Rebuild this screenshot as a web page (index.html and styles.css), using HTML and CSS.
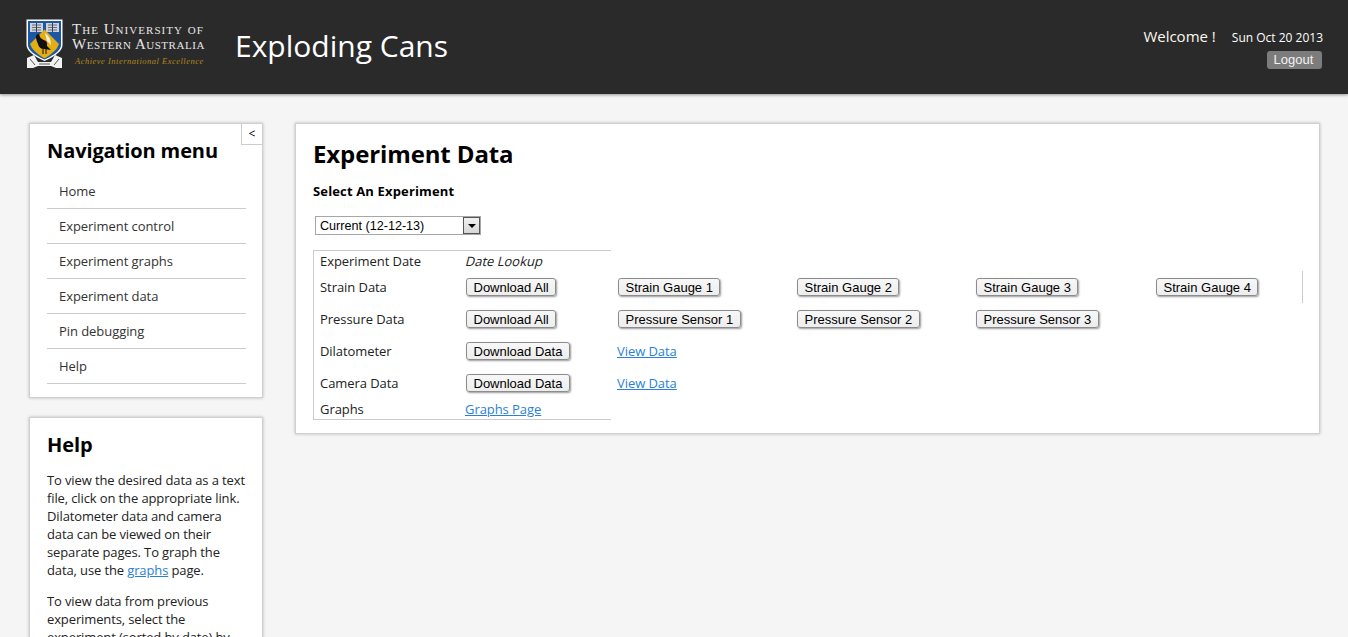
FILE: index.html
```html
<!DOCTYPE html>
<html lang="en">
<head>
<meta charset="utf-8">
<title>Exploding Cans</title>
<link rel="stylesheet" href="styles.css">
</head>
<body>
<div class="page">
  <header class="topbar">
    <div class="logo">
      <svg class="crest" width="37" height="50" viewBox="0 0 37 50">
        <path d="M0.5 0.5H36.500V26Q36.500 34 18.500 42Q0.500 34 0.500 26Z" fill="#fff"/>
        <path d="M2 2H35V26Q35 33 18.500 40.500Q2 33 2 26Z" fill="#1b57a4"/>
        <rect x="4" y="4" width="13" height="9" fill="#cfd3d8"/>
        <rect x="20" y="4" width="13" height="9" fill="#cfd3d8"/>
        <path d="M6 6H15M6 8.500H15M6 11H15M22 6H31M22 8.500H31M22 11H31" stroke="#69707c" stroke-width="1"/>
        <path d="M10.500 4V13M26.500 4V13" stroke="#33405c" stroke-width="1"/>
        <path d="M18.500 10.500L33 25Q31 32 18.500 39.500Q6 32 4 25Z" fill="#e3ad14"/>
        <path d="M13 15Q9.500 15 10 19Q10.500 22 12 25Q13 30 18 30L25 31L21 27Q22 24 20 22Q15 20 14 18Z" fill="#111"/>
        <path d="M19 14Q25 18 25 26L21 22Z" fill="#f1eedf"/>
        <path d="M17 30V35M20 30V35" stroke="#111" stroke-width="1"/>
        <path d="M1 39L8 36L12 43L25 43L29 36L36 39V49H30L25 47H12L7 49H1Z" fill="#f2f2f2"/>
        <path d="M4 40L9 46M33 40L28 46M13 45H24" stroke="#555" stroke-width="1"/>
      </svg>
      <div class="wordmark">
        <div class="wordline lineone">The University of</div>
        <div class="wordline linetwo">Western Australia</div>
        <div class="tagline">Achieve International Excellence</div>
      </div>
    </div>
    <div class="sitename">Exploding Cans</div>
    <div class="userbox">
      <div class="userline"><span class="welcome">Welcome !</span><span class="date">Sun Oct 20 2013</span></div>
      <a class="logout" href="#">Logout</a>
    </div>
  </header>

  <div class="content">
    <aside class="sidebar">
      <section class="card navcard">
        <button class="collapse" type="button">&lt;</button>
        <h2>Navigation menu</h2>
        <ul class="nav">
          <li>Home</li>
          <li>Experiment control</li>
          <li>Experiment graphs</li>
          <li>Experiment data</li>
          <li>Pin debugging</li>
          <li>Help</li>
        </ul>
      </section>
      <section class="card helpcard">
        <h2>Help</h2>
        <p>To view the desired data as a text file, click on the appropriate link. Dilatometer data and camera data can be viewed on their separate pages. To graph the data, use the <a href="#">graphs</a> page.</p>
        <p>To view data from previous experiments, select the experiment (sorted by date) by</p>
      </section>
    </aside>

    <main class="card maincard">
      <h1>Experiment Data</h1>
      <h3>Select An Experiment</h3>
      <div class="selectwrap">
        <select class="picker"><option>Current (12-12-13)</option></select>
        <span class="selectarrow"></span>
      </div>
      <table class="data">
        <colgroup>
          <col class="c1"><col class="c2"><col class="c3"><col class="c3"><col class="c5"><col class="c6">
        </colgroup>
        <tr class="firstrow">
          <td class="lead top">Experiment Date</td>
          <td class="top"><em>Date Lookup</em></td>
          <td colspan="4" class="blank"></td>
        </tr>
        <tr class="btnrow">
          <td class="lead">Strain Data</td>
          <td><button type="button">Download All</button></td>
          <td><button type="button">Strain Gauge 1</button></td>
          <td><button type="button">Strain Gauge 2</button></td>
          <td><button type="button">Strain Gauge 3</button></td>
          <td class="rightedge"><button type="button">Strain Gauge 4</button></td>
        </tr>
        <tr class="btnrow">
          <td class="lead">Pressure Data</td>
          <td><button type="button">Download All</button></td>
          <td><button type="button">Pressure Sensor 1</button></td>
          <td><button type="button">Pressure Sensor 2</button></td>
          <td><button type="button">Pressure Sensor 3</button></td>
          <td></td>
        </tr>
        <tr class="btnrow">
          <td class="lead">Dilatometer</td>
          <td><button type="button">Download Data</button></td>
          <td colspan="4"><a href="#">View Data</a></td>
        </tr>
        <tr class="btnrow">
          <td class="lead">Camera Data</td>
          <td><button type="button">Download Data</button></td>
          <td colspan="4"><a href="#">View Data</a></td>
        </tr>
        <tr class="lastrow">
          <td class="lead bottom">Graphs</td>
          <td class="bottom"><a href="#">Graphs Page</a></td>
          <td colspan="4" class="blank"></td>
        </tr>
      </table>
    </main>
  </div>
</div>
</body>
</html>
```

FILE: styles.css
```css
* { box-sizing: border-box; }
html, body { margin: 0; padding: 0; }
body {
  background: #f5f5f5;
  color: #000;
  font-family: "Open Sans", "Liberation Sans", sans-serif;
  font-size: 13px;
}
.page { height: 637px; overflow: hidden; }
a { color: #2a7fd6; }

.topbar {
  height: 94px;
  background: #2a2a2a;
  box-shadow: 0 1px 3px rgba(0,0,0,.4);
  display: flex;
  align-items: flex-start;
  color: #fff;
  padding: 0 25px 0 26px;
}
.logo { display: flex; margin-top: 19px; width: 179px; flex: none; }
.crest { flex: none; display: block; }
.wordmark { margin-left: 9px; width: 134px; white-space: nowrap; font-family: "Liberation Serif", serif; color: #e6e6e6; }
.wordline {
  font-size: 15px;
  line-height: 15px;
  font-variant: small-caps;
}
.lineone { margin-top: 3px; letter-spacing: 1.04px; }
.linetwo { letter-spacing: .53px; }
.tagline {
  margin: 3px 0 0 3px;
  font-size: 8.500px;
  line-height: 12px;
  font-style: italic;
  letter-spacing: .5px;
  color: #b0891c;
}
.sitename { margin: 25px 0 0 30px; font-size: 30px; line-height: 41px; }
.userbox { margin-left: auto; display: flex; flex-direction: column; align-items: flex-end; }
.userline { margin-top: 25px; display: flex; align-items: baseline; height: 22px; }
.welcome { font-size: 15px; line-height: 22px; color: #fbf8ee; }
.date { margin-left: 16px; font-size: 12px; }
.logout {
  margin-top: 4px;
  margin-right: 1px;
  width: 55px;
  height: 18px;
  padding-right: 2px;
  border-radius: 3px;
  background: #7c7c7c;
  color: #f2f2f2;
  font-family: "Liberation Sans", sans-serif;
  font-size: 13px;
  line-height: 18px;
  text-align: center;
  text-decoration: none;
}

.content { display: flex; align-items: flex-start; padding: 29px 28px 0 29px; gap: 32px; }
.card { background: #fff; border: 1px solid #d0d0d0; box-shadow: 0 0 3px rgba(0,0,0,.25); }
.sidebar { width: 234px; flex: none; display: flex; flex-direction: column; gap: 19px; }

.navcard { position: relative; height: 275px; padding: 0 16px 0 17px; }
.collapse {
  position: absolute;
  top: 0;
  right: 0;
  width: 21px;
  height: 21px;
  padding: 0;
  background: #fff;
  border: 0;
  border-left: 1px solid #ccc;
  border-bottom: 1px solid #ccc;
  font: 12px/18px "Open Sans", sans-serif;
  color: #000;
}
h2 { margin: 0; font-size: 20px; line-height: 27px; font-weight: 700; letter-spacing: -.1px; }
.navcard h2 { padding-top: 13px; height: 41px; }
.nav { list-style: none; margin: 9px 0 0; padding: 0; letter-spacing: -.06px; }
.nav li {
  height: 35px;
  line-height: 34px;
  padding-left: 12px;
  border-bottom: 1px solid #ccc;
  color: #333;
}
.helpcard { padding: 13px 11px 0 17px; }
.helpcard p { margin: 13px 0 0; line-height: 18px; color: #222; letter-spacing: -.12px; }
.helpcard h2 + p { margin-top: 13px; }

.maincard { flex: 1; min-width: 0; height: 311px; padding: 13px 16px 0 17px; }
h1 { margin: 0; font-size: 24px; line-height: 33px; font-weight: 700; letter-spacing: -.12px; }
h3 { margin: 12px 0 0; font-size: 13px; line-height: 18px; font-weight: 700; letter-spacing: .15px; }
.selectwrap { position: relative; width: 166px; height: 19px; margin: 16px 0 0 2px; }
.picker {
  appearance: none;
  -webkit-appearance: none;
  display: block;
  width: 100%;
  height: 100%;
  padding: 0 0 0 4px;
  background: #fff;
  border: 1px solid #a6a6a6;
  border-radius: 0;
  color: #000;
  font: 12.600px "Liberation Sans", sans-serif;
}
.selectarrow {
  position: absolute;
  top: 1px;
  right: 1px;
  width: 17px;
  height: 17px;
  background: linear-gradient(#f2f2f2, #d6d6d6);
  border: 1px solid #555;
  pointer-events: none;
}
.selectarrow::after {
  content: "";
  position: absolute;
  left: 4px;
  top: 6px;
  border: 4px solid transparent;
  border-top: 4px solid #000;
  border-bottom: 0;
}

.data { margin-top: 15px; border-collapse: separate; border-spacing: 0; table-layout: fixed; width: 990px; letter-spacing: -.06px; }
.c1 { width: 146px; }
.c2 { width: 152px; }
.c3 { width: 179px; }
.c5 { width: 180px; }
.c6 { width: 154px; }
.data td { padding: 0 0 0 6px; height: 32px; vertical-align: middle; font-size: 13px; }
.data .lead { padding-left: 6px; border-left: 1px solid #ccc; color: #222; }
.data tr.firstrow td { height: 21px; line-height: 18px; }
.data tr.lastrow td { height: 21px; line-height: 18px; padding-bottom: 1px; }
.data td.top { border-top: 1px solid #ccc; height: 22px; padding-bottom: 1px; }
.data td.bottom { border-bottom: 1px solid #ccc; }
.data td.rightedge { border-right: 1px solid #ccc; }
.data td.blank { padding: 0; }
.data em { display: inline-block; margin-left: 1px; font-style: normal; letter-spacing: 0; transform: skewX(-14deg); color: #222; }
.data button {
  display: block;
  height: 18px;
  margin-left: 1px;
  padding: 0 6.500px;
  background: linear-gradient(#f7f7f7, #ededed);
  border: 1px solid #8c8c8c;
  border-radius: 3px;
  box-shadow: 1px 1px 2px rgba(0,0,0,.4);
  color: #000;
  font: 13px/15px "Liberation Sans", sans-serif;
  letter-spacing: 0;
  white-space: nowrap;
}
```
